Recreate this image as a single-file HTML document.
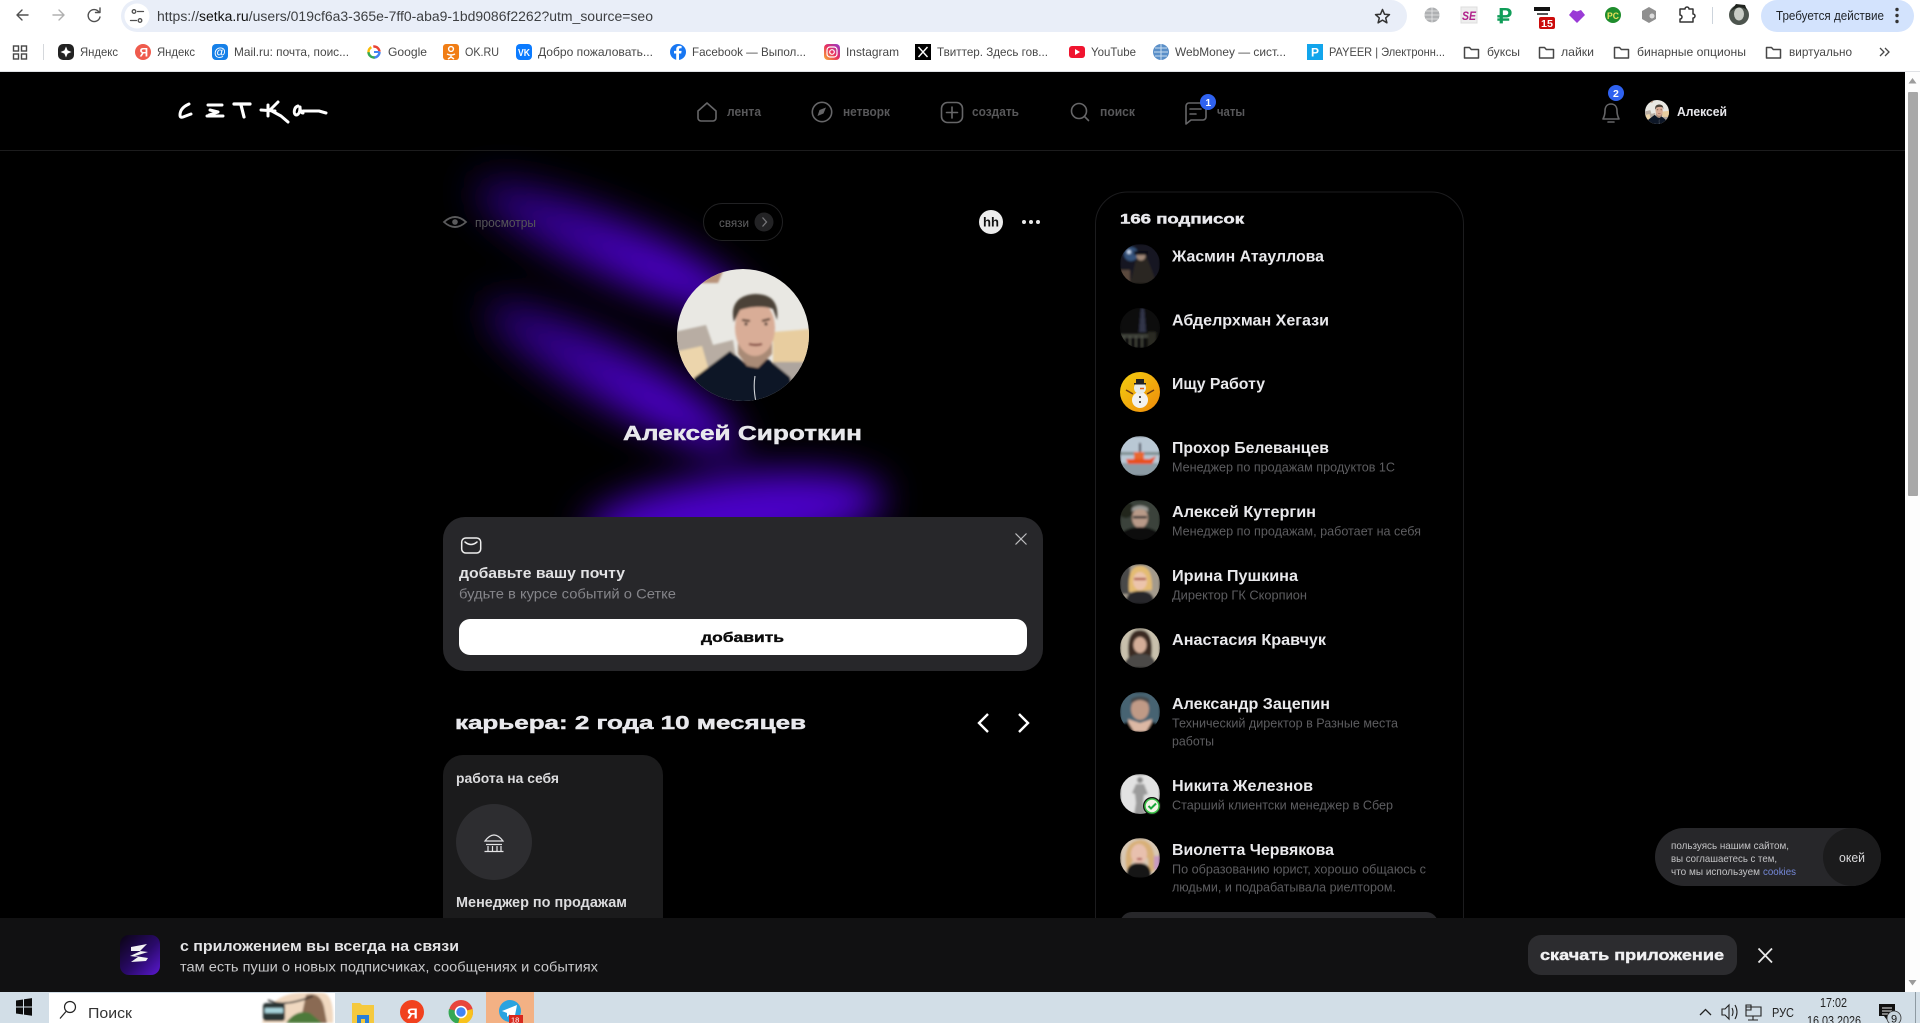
<!DOCTYPE html>
<html lang="ru"><head><meta charset="utf-8"><title>Сетка</title>
<style>
html,body{margin:0;padding:0;background:#000;width:1920px;height:1023px;overflow:hidden}
svg{display:block;position:absolute;left:0;top:0;filter:blur(.35px)}
text{font-family:"Liberation Sans","Noto Sans CJK SC",sans-serif;white-space:pre}
.bm{font-size:12px;fill:#474747}
.nav{font-size:13px;font-weight:bold;fill:#58585a}
.nm{font-size:15.5px;font-weight:bold;fill:#e9e9ec}
.sb{font-size:13px;fill:#5d5d60}
.wd{font-weight:bold;fill:#e8e8ec;stroke:#e8e8ec;stroke-width:.45}
.ic{fill:none;stroke:#666668;stroke-width:1.6;stroke-linecap:round;stroke-linejoin:round}
.ch{fill:none;stroke:#505050;stroke-width:1.4;stroke-linecap:round;stroke-linejoin:round}
</style></head><body>
<svg width="1920" height="1023" viewBox="0 0 1920 1023" xmlns="http://www.w3.org/2000/svg">
<defs>
<filter id="blur" x="-40%" y="-100%" width="180%" height="300%"><feGaussianBlur stdDeviation="19"/></filter>
<filter id="s1" x="-20%" y="-20%" width="140%" height="140%"><feGaussianBlur stdDeviation="1.1"/></filter>
<filter id="s2" x="-20%" y="-20%" width="140%" height="140%"><feGaussianBlur stdDeviation="1"/></filter>
<clipPath id="pageclip"><rect x="0" y="72" width="1905" height="846"/></clipPath>
<clipPath id="big"><circle cx="743" cy="335" r="66"/></clipPath>
<clipPath id="av"><circle cx="0" cy="0" r="20"/></clipPath>
<linearGradient id="yel" x1="0" y1="0" x2="1" y2="1"><stop offset="0" stop-color="#f2cf10"/><stop offset="1" stop-color="#f08a0a"/></linearGradient>
<linearGradient id="app" x1="0" y1="0" x2="1" y2="1"><stop offset="0" stop-color="#0a0412"/><stop offset="0.55" stop-color="#2a0a6a"/><stop offset="1" stop-color="#5a18d0"/></linearGradient>
<linearGradient id="ig" x1="0" y1="1" x2="1" y2="0"><stop offset="0" stop-color="#f9b233"/><stop offset="0.5" stop-color="#e8305f"/><stop offset="1" stop-color="#8f3bd0"/></linearGradient>
<linearGradient id="st1" x1="0" y1="0" x2="1" y2="0"><stop offset="0" stop-color="#26006e"/><stop offset=".7" stop-color="#4c00c8"/><stop offset="1" stop-color="#4c00c8"/></linearGradient>
<g id="folder"><path d="M1.500 3.500h5l1.800 2h7.200v8.500h-14z" fill="none" stroke="#474747" stroke-width="1.500" stroke-linejoin="round"/></g>
<g id="face">
 <g clip-path="url(#big)">
  <rect x="670" y="262" width="146" height="146" fill="#e9e8e3"/>
  <g filter="url(#s1)">
  <path d="M700 269h24l-6 14h-18z" fill="#b8937a"/>
  <path d="M674 332l32-7 7 20 20-5 5 30-64 12z" fill="#b8ada3"/>
  <path d="M674 352l28-6 8 28-20 12-16-10z" fill="#ecd5ac"/>
  <path d="M773 332l38-3v34l-38 0z" fill="#e8cd9f"/>
  <path d="M773 362h36v22h-30z" fill="#aea59e"/>
  <path d="M688 404l6-26 36-27 16 13 22-5 22 18 6 27z" fill="#0e1926"/>
  <path d="M738 342l34-4v16l-14 14-11-2-9-12z" fill="#a98a76"/>
  <ellipse cx="755" cy="328" rx="20" ry="28" fill="#d9ad97"/>
  <path d="M734 322c-4-16 3-27 21-28 18 0 24 10 22 26l-4-11c-8-3-22-3-33 1z" fill="#4c4238"/>
  <path d="M742 320l8 1M762 321l8-2" stroke="#4a3428" stroke-width="2" fill="none"/>
  <circle cx="746" cy="324" r="1.500" fill="#2c2420"/><circle cx="766" cy="324" r="1.500" fill="#2c2420"/>
  <path d="M749 344q7 2 13 0" stroke="#7c3f38" stroke-width="2.200" fill="none"/>
  </g>
  <path d="M755 376q-2 12 1 26" stroke="#cfd2d6" stroke-width="1.100" fill="none"/>
 </g>
</g>
</defs>

<!-- page -->
<rect width="1920" height="1023" fill="#000"/>
<g clip-path="url(#pageclip)">
 <g filter="url(#blur)">
  <ellipse cx="612" cy="248" rx="150" ry="29" transform="rotate(24 612 248)" fill="url(#st1)"/>
  <ellipse cx="612" cy="376" rx="145" ry="29" transform="rotate(29 612 376)" fill="url(#st1)"/>
  <ellipse cx="735" cy="515" rx="150" ry="40" transform="rotate(-7 735 515)" fill="#4c00c8"/>
 </g>
</g>

<!-- browser chrome -->
<rect width="1920" height="71" fill="#fff"/>
<rect y="71" width="1920" height="1" fill="#dfe1e5"/>
<path class="ch" d="M28 15H17M22 10l-5 5 5 5"/>
<path class="ch" style="stroke:#b0b0b0" d="M53 15h11M59 10l5 5-5 5"/>
<path class="ch" d="M99 12a6 6 0 1 0 1 5M100 8v4.500h-4.500"/>
<path d="M137 0h1254a16 16 0 0 1 16 16a16 16 0 0 1 -16 16H137a16 16 0 0 1 -16-16a16 16 0 0 1 16-16z" fill="#e9eef8"/>
<circle cx="137" cy="16" r="12.500" fill="#fff"/>
<g class="ch" style="stroke-width:1.300"><circle cx="134" cy="11.500" r="1.800"/><circle cx="140" cy="20.500" r="1.800"/><path d="M137.500 11.500h6M130.500 20.500h6"/></g>
<text x="157" y="21" font-size="13.500" fill="#3d3f42" textLength="496" lengthAdjust="spacingAndGlyphs">https://<tspan fill="#111">setka.ru</tspan>/users/019cf6a3-365e-7ff0-aba9-1bd9086f2262?utm_source=seo</text>
<path d="M1382.500 9.500l2 4.700 5 .4-3.800 3.300 1.200 4.900-4.400-2.700-4.400 2.700 1.200-4.900-3.800-3.300 5-.4z" fill="none" stroke="#333" stroke-width="1.500" stroke-linejoin="round"/>

<!-- extensions -->
<circle cx="1432" cy="15" r="7.500" fill="#aeb0b2"/><path d="M1424.500 15h15M1432 7.500v15M1426 11h12M1426 19h12" stroke="#e8e8e8" stroke-width=".8"/>
<rect x="1461" y="7" width="16" height="16" fill="#eee" stroke="#ddd"/><text x="1462" y="20" font-size="12" font-weight="bold" font-style="italic" fill="#b0208a" textLength="14" lengthAdjust="spacingAndGlyphs">SE</text>
<text x="1497" y="23" font-size="20" font-weight="bold" fill="#0f9d58" textLength="15" lengthAdjust="spacingAndGlyphs">₽</text>
<rect x="1534" y="7" width="16" height="4" fill="#111"/><rect x="1537" y="13" width="11" height="2" fill="#555"/>
<rect x="1539" y="17" width="16" height="12" rx="2" fill="#cc0c0c"/><text x="1541" y="27" font-size="10" font-weight="bold" fill="#fff" textLength="12" lengthAdjust="spacingAndGlyphs">15</text>
<path d="M1577 23l-8-8 4-5 4 1.500 4-1.500 4 5z" fill="#9a3ad6"/>
<circle cx="1613" cy="15" r="8" fill="#1f8d2d"/><text x="1607" y="19" font-size="9" font-weight="bold" fill="#e8e05a" textLength="12" lengthAdjust="spacingAndGlyphs">PC</text>
<path d="M1649 7l7 4v8l-7 4-7-4v-8z" fill="#8f8f8f"/><circle cx="1652" cy="16" r="2.500" fill="#ddd"/>
<path d="M1680 9h5a2 2 0 0 1 4 0h4v5a2 2 0 0 1 0 4v4h-13v-3a2 2 0 0 0 0-4z" fill="none" stroke="#333" stroke-width="1.500" stroke-linejoin="round"/>
<rect x="1712" y="7" width="1" height="17" fill="#cdd4dc"/>
<circle cx="1739" cy="15" r="10" fill="#4d554e"/><ellipse cx="1739" cy="14" rx="5" ry="6.500" fill="#c9cdc6"/><path d="M1730 12q9-8 17-2l-2-5-9-1z" fill="#20241f"/>
<path d="M1777 0h121a16 16 0 0 1 16 16a16 16 0 0 1-16 16h-121a16 16 0 0 1-16-16a16 16 0 0 1 16-16z" fill="#d3e3fd"/>
<text x="1776" y="20" font-size="12.500" fill="#1f2328" textLength="108" lengthAdjust="spacingAndGlyphs">Требуется действие</text>
<g fill="#333"><circle cx="1897" cy="9.500" r="1.700"/><circle cx="1897" cy="15.500" r="1.700"/><circle cx="1897" cy="21.500" r="1.700"/></g>

<!-- bookmarks -->
<g fill="none" stroke="#474747" stroke-width="1.400"><rect x="13.500" y="46" width="5" height="5"/><rect x="21.500" y="46" width="5" height="5"/><rect x="13.500" y="54" width="5" height="5"/><rect x="21.500" y="54" width="5" height="5"/></g>
<rect x="43" y="44" width="1" height="16" fill="#d5d8dc"/>
<rect x="58" y="44" width="16" height="16" rx="5" fill="#222"/><path d="M66 46.500l1.600 3.900 3.900 1.600-3.900 1.600L66 57.500l-1.600-3.900-3.900-1.600 3.900-1.600z" fill="#fff"/>
<text class="bm" x="80" y="56" textLength="38" lengthAdjust="spacingAndGlyphs">Яндекс</text>
<circle cx="143" cy="52" r="8" fill="#ef5b4d"/><text x="139.500" y="56.500" font-size="12" font-weight="bold" fill="#fff">Я</text>
<text class="bm" x="157" y="56" textLength="38" lengthAdjust="spacingAndGlyphs">Яндекс</text>
<rect x="212" y="44" width="16" height="16" rx="4" fill="#1680e8"/><text x="214" y="56" font-size="12" font-weight="bold" fill="#fff">@</text>
<text class="bm" x="234" y="56" textLength="115" lengthAdjust="spacingAndGlyphs">Mail.ru: почта, поис...</text>
<circle cx="374" cy="52" r="5.500" fill="none" stroke="#4285f4" stroke-width="2.400" stroke-dasharray="9 26"/><circle cx="374" cy="52" r="5.500" fill="none" stroke="#ea4335" stroke-width="2.400" stroke-dasharray="9 26" stroke-dashoffset="-25"/><circle cx="374" cy="52" r="5.500" fill="none" stroke="#fbbc05" stroke-width="2.400" stroke-dasharray="7 28" stroke-dashoffset="-16"/><circle cx="374" cy="52" r="5.500" fill="none" stroke="#34a853" stroke-width="2.400" stroke-dasharray="9 26" stroke-dashoffset="-8"/><path d="M374 52h5.500" stroke="#4285f4" stroke-width="2"/>
<text class="bm" x="388" y="56" textLength="39" lengthAdjust="spacingAndGlyphs">Google</text>
<rect x="443" y="44" width="16" height="16" rx="3" fill="#f07d15"/><circle cx="451" cy="49" r="2.400" fill="none" stroke="#fff" stroke-width="1.400"/><path d="M447 54q4 2 8 0M451 55v2M448 59l3-2 3 2" stroke="#fff" stroke-width="1.400" fill="none"/>
<text class="bm" x="465" y="56" textLength="34" lengthAdjust="spacingAndGlyphs">OK.RU</text>
<rect x="516" y="44" width="16" height="16" rx="4" fill="#0b7bff"/><text x="518" y="56" font-size="10" font-weight="bold" fill="#fff" textLength="12" lengthAdjust="spacingAndGlyphs">VK</text>
<text class="bm" x="538" y="56" textLength="115" lengthAdjust="spacingAndGlyphs">Добро пожаловать...</text>
<circle cx="678" cy="52" r="8" fill="#1877f2"/><path d="M679 60v-6.500h2.200l.4-2.600H679V49.600c0-.8.3-1.300 1.400-1.300h1.200V46c-.5 0-1.200-.1-2-.1-2 0-3.400 1.200-3.400 3.400v1.600H674v2.600h2.200V60z" fill="#fff"/>
<text class="bm" x="692" y="56" textLength="114" lengthAdjust="spacingAndGlyphs">Facebook — Выпол...</text>
<rect x="824" y="44" width="16" height="16" rx="4" fill="url(#ig)"/><rect x="827" y="47" width="10" height="10" rx="3" fill="none" stroke="#fff" stroke-width="1.200"/><circle cx="832" cy="52" r="2.300" fill="none" stroke="#fff" stroke-width="1.200"/>
<text class="bm" x="846" y="56" textLength="53" lengthAdjust="spacingAndGlyphs">Instagram</text>
<rect x="915" y="44" width="16" height="16" fill="#000"/><path d="M918.500 47l9 10M927.500 47l-9 10" stroke="#fff" stroke-width="1.400"/>
<text class="bm" x="937" y="56" textLength="111" lengthAdjust="spacingAndGlyphs">Твиттер. Здесь гов...</text>
<rect x="1069" y="46" width="16" height="12" rx="3" fill="#f0142f"/><path d="M1075 49l5 3-5 3z" fill="#fff"/>
<text class="bm" x="1091" y="56" textLength="45" lengthAdjust="spacingAndGlyphs">YouTube</text>
<circle cx="1161" cy="52" r="8" fill="#5a8fc8"/><path d="M1155 48h12M1154 52h14M1155 56h12M1161 44v16" stroke="#c8dcf0" stroke-width="1"/>
<text class="bm" x="1175" y="56" textLength="111" lengthAdjust="spacingAndGlyphs">WebMoney — сист...</text>
<rect x="1307" y="44" width="16" height="16" fill="#12a5ec"/><text x="1311" y="56.500" font-size="12" font-weight="bold" fill="#fff">P</text>
<text class="bm" x="1329" y="56" textLength="116" lengthAdjust="spacingAndGlyphs">PAYEER | Электронн...</text>
<use href="#folder" x="1463" y="44"/><text class="bm" x="1487" y="56" textLength="33" lengthAdjust="spacingAndGlyphs">буксы</text>
<use href="#folder" x="1538" y="44"/><text class="bm" x="1561" y="56" textLength="33" lengthAdjust="spacingAndGlyphs">лайки</text>
<use href="#folder" x="1613" y="44"/><text class="bm" x="1637" y="56" textLength="109" lengthAdjust="spacingAndGlyphs">бинарные опционы</text>
<use href="#folder" x="1765" y="44"/><text class="bm" x="1789" y="56" textLength="63" lengthAdjust="spacingAndGlyphs">виртуально</text>
<path d="M1880 48l4 4-4 4M1885 48l4 4-4 4" fill="none" stroke="#474747" stroke-width="1.300"/>

<!-- site header -->
<rect x="0" y="150" width="1905" height="1" fill="#1c1c1d"/>
<g fill="none" stroke="#fff" stroke-linecap="round" stroke-linejoin="round">
 <path d="M189 104q-9 4-9 11 0 3 3 2l8-3" stroke-width="3"/>
 <path d="M208 105h14M210 110l8 2-9 3M207 116h16" stroke-width="3"/>
 <path d="M234 104h16M241 105l3 12" stroke-width="3.200"/>
 <path d="M261 110l14 1M268 105v11M278 102l-8 8 11 6 7 6" stroke-width="3"/>
 <path d="M298 106c-4 1-5 8-2 9 3 0 4-4 4-8 0 3 1 6 3 6M303 111h16l7 2" stroke-width="3"/>
</g>
<!-- nav -->
<path class="ic" d="M707 103l9 8v7a3 3 0 0 1-3 3h-12a3 3 0 0 1-3-3v-7z"/>
<text class="nav" x="727" y="116" textLength="34" lengthAdjust="spacingAndGlyphs">лента</text>
<circle class="ic" cx="822" cy="112" r="9.700"/><path d="M826 107.500l-6.500 2.500-2 6 6-2.500z" fill="#666668"/>
<text class="nav" x="843" y="116" textLength="47" lengthAdjust="spacingAndGlyphs">нетворк</text>
<rect class="ic" x="941.500" y="102.500" width="21" height="20" rx="6"/><path class="ic" d="M952 107v11M946.500 112.500h11"/>
<text class="nav" x="972" y="116" textLength="47" lengthAdjust="spacingAndGlyphs">создать</text>
<circle class="ic" cx="1079" cy="111" r="7.500"/><path class="ic" d="M1084.500 116.500l4 4"/>
<text class="nav" x="1100" y="116" textLength="35" lengthAdjust="spacingAndGlyphs">поиск</text>
<path class="ic" d="M1190 103h13a3 3 0 0 1 3 3v11a3 3 0 0 1-3 3h-12l-5 4v-18a3 3 0 0 1 3-3z"/><path class="ic" d="M1190 109h11M1190 114h6"/>
<circle cx="1208" cy="102" r="8" fill="#2f62f0"/><text x="1205.500" y="106" font-size="10" font-weight="bold" fill="#fff">1</text>
<text class="nav" x="1217" y="116" textLength="28" lengthAdjust="spacingAndGlyphs">чаты</text>
<path class="ic" d="M1611 104c-4 0-6 3-6 7 0 4-1 6-2 8h16c-1-2-2-4-2-8 0-4-2-7-6-7zM1608 122h6"/>
<circle cx="1616" cy="93" r="8" fill="#2f62f0"/><text x="1613" y="97" font-size="10.500" font-weight="bold" fill="#fff">2</text>
<g transform="translate(1657 112) scale(.182) translate(-743 -335)"><use href="#face"/></g>
<text x="1677" y="116" font-size="13" font-weight="bold" fill="#e8e8ec" textLength="50" lengthAdjust="spacingAndGlyphs">Алексей</text>

<!-- profile top -->
<path d="M444 222q11-10 22 0q-11 10-22 0z" fill="none" stroke="#5a5a5c" stroke-width="1.800"/><circle cx="455" cy="222" r="2.800" fill="#5a5a5c"/>
<text x="475" y="227" font-size="12.500" fill="#565658" textLength="61" lengthAdjust="spacingAndGlyphs">просмотры</text>
<rect x="703.500" y="203.500" width="79" height="37" rx="18.500" fill="#000" stroke="#212123"/>
<text x="719" y="227" font-size="12" fill="#606062" textLength="30" lengthAdjust="spacingAndGlyphs">связи</text>
<circle cx="764" cy="222" r="9.500" fill="#232325"/><path d="M762.500 217.500l4 4.500-4 4.500" fill="none" stroke="#77777a" stroke-width="1.300"/>
<circle cx="991" cy="222" r="12" fill="#ececec"/><text x="983" y="226.500" font-size="13" font-weight="bold" fill="#111" textLength="16" lengthAdjust="spacingAndGlyphs">hh</text>
<g fill="#e8e8e8"><circle cx="1024" cy="222" r="2"/><circle cx="1031" cy="222" r="2"/><circle cx="1038" cy="222" r="2"/></g>
<use href="#face"/>
<text class="wd" x="623" y="440" font-size="20" textLength="239" lengthAdjust="spacingAndGlyphs">Алексей Сироткин</text>

<!-- mail card -->
<rect x="443" y="517" width="600" height="154" rx="22" fill="#27272a"/>
<rect x="461.700" y="538" width="19" height="15" rx="4" fill="none" stroke="#eee" stroke-width="1.500"/><path d="M465 542q6 5 12 0" fill="none" stroke="#eee" stroke-width="1.500" stroke-linecap="round"/>
<path d="M1015.500 533.500l11 11M1026.500 533.500l-11 11" stroke="#bdbdbf" stroke-width="1.200"/>
<text x="459" y="578" font-size="15" font-weight="bold" fill="#e2e2e4" textLength="166" lengthAdjust="spacingAndGlyphs">добавьте вашу почту</text>
<text x="459" y="598.500" font-size="14" fill="#85858a" textLength="217" lengthAdjust="spacingAndGlyphs">будьте в курсе событий о Сетке</text>
<rect x="459" y="619" width="568" height="36" rx="11" fill="#fff"/>
<text x="701" y="642" font-size="13.500" font-weight="bold" fill="#0a0a0a" stroke="#0a0a0a" stroke-width=".35" textLength="83" lengthAdjust="spacingAndGlyphs">добавить</text>

<!-- career -->
<text class="wd" x="455" y="729" font-size="18" textLength="351" lengthAdjust="spacingAndGlyphs">карьера: 2 года 10 месяцев</text>
<path d="M988 714l-9 9 9 9M1019 714l9 9-9 9" fill="none" stroke="#fff" stroke-width="2.400"/>
<path d="M443 930V775a20 20 0 0 1 20-20h180a20 20 0 0 1 20 20v155z" fill="#1b1b1c"/>
<text x="456" y="783" font-size="14" font-weight="bold" fill="#dcdcde" textLength="103" lengthAdjust="spacingAndGlyphs">работа на себя</text>
<circle cx="494" cy="842" r="38" fill="#2d2d30"/>
<path d="M485 841q9-12 18 0zM486 844.500h16M488 846v5M492.500 846v5M497 846v5M501 846v5M484.500 851.500h19" fill="none" stroke="#e4e4e6" stroke-width="1.200"/>
<text x="456" y="907" font-size="14.500" font-weight="bold" fill="#dcdcde" textLength="171" lengthAdjust="spacingAndGlyphs">Менеджер по продажам</text>

<!-- right panel -->
<path d="M1095.500 930V224a32 32 0 0 1 32-32h304a32 32 0 0 1 32 32v706" fill="none" stroke="#1c1c1e"/>
<text class="wd" x="1120" y="223.500" font-size="13.500" textLength="124" lengthAdjust="spacingAndGlyphs">166 подписок</text>

<!-- avatars -->
<g transform="translate(1140 264)"><g clip-path="url(#av)" filter="url(#s2)"><rect x="-20" y="-20" width="40" height="40" fill="#141820"/><circle cx="-9" cy="-10" r="7" fill="#36527c"/><circle cx="-11" cy="-12" r="2" fill="#c8d8ee"/><path d="M-4-4l10-4 5 12 6 16H-10z" fill="#2c2620"/><circle cx="1" cy="-8" r="4.500" fill="#a08878"/><path d="M-6-13h14v4H-6z" fill="#101014"/><rect x="-20" y="6" width="10" height="14" fill="#5a4a3c"/></g></g>
<g transform="translate(1140 328)"><g clip-path="url(#av)" filter="url(#s2)"><rect x="-20" y="-20" width="40" height="40" fill="#08090c"/><path d="M1-20l3 0 2 24H-1z" fill="#33364a"/><path d="M-20 7h30v2H-20zM-16 8v12M-10 8v12M-4 8v12M2 8v12" stroke="#6a6f62" stroke-width=".8" fill="none"/><rect x="8" y="4" width="8" height="16" fill="#2a2a22"/></g></g>
<g transform="translate(1140 392)"><g clip-path="url(#av)"><rect x="-20" y="-20" width="40" height="40" fill="url(#yel)"/><circle cx="0" cy="8" r="8" fill="#f2f2f0"/><circle cx="0" cy="-4" r="6" fill="#e6ecea"/><rect x="-4" y="-13" width="8" height="5" fill="#222"/><rect x="-6" y="-9" width="12" height="1.500" fill="#222"/><path d="M-7 2l-7-4M7 2l7-4" stroke="#6a3a14" stroke-width="1.500"/><circle cy="5" r="1" fill="#222"/><circle cy="10" r="1" fill="#222"/><path d="M0-3.500h4" stroke="#e8641a" stroke-width="1.500"/></g></g>
<g transform="translate(1140 456)"><g clip-path="url(#av)" filter="url(#s2)"><rect x="-20" y="-20" width="40" height="27" fill="#b9c8d4"/><rect x="-20" y="7" width="40" height="13" fill="#8c9ba4"/><rect x="-20" y="-4" width="40" height="3" fill="#7e8e90"/><path d="M-14 3h24l6-3-4 8h-24z" fill="#e8501e"/><rect x="-6" y="-4" width="10" height="7" fill="#e8682e"/><rect x="-1" y="-13" width="2" height="9" fill="#334"/></g></g>
<g transform="translate(1140 520)"><g clip-path="url(#av)" filter="url(#s2)"><rect x="-20" y="-20" width="40" height="40" fill="#3a423a"/><circle cx="-14" cy="-10" r="8" fill="#22261f"/><ellipse cy="-2" rx="8" ry="10" fill="#b89a88"/><path d="M-8-8q8-6 16 0l0-4q-8-5-16 0z" fill="#9a9a94"/><rect x="-7" y="-4" width="14" height="2.500" fill="#333"/><path d="M-20 20v-6q8-7 20-7t20 7v6z" fill="#0e0e10"/></g></g>
<g transform="translate(1140 584)"><g clip-path="url(#av)" filter="url(#s2)"><rect x="-20" y="-20" width="40" height="40" fill="#a39a8c"/><rect x="-20" y="-20" width="10" height="30" fill="#4a4a48"/><path d="M-11 8q-2-26 11-26 13 0 12 24z" fill="#e4bc72"/><ellipse cy="-3" rx="7" ry="9" fill="#ecc4ac"/><rect x="-6" y="-6" width="12" height="2" fill="#a03028"/><path d="M-14 20q-1-13 14-13t14 13z" fill="#26282c"/></g></g>
<g transform="translate(1140 648)"><g clip-path="url(#av)" filter="url(#s2)"><rect x="-20" y="-20" width="40" height="40" fill="#c8c0ac"/><path d="M-11 12q-4-30 11-30t11 30z" fill="#3a2a20"/><ellipse cy="-3" rx="6.500" ry="8" fill="#d4ae98"/><path d="M-16 20q0-13 16-14t16 14z" fill="#4c4a46"/></g></g>
<g transform="translate(1140 712)"><g clip-path="url(#av)" filter="url(#s2)"><rect x="-20" y="-20" width="40" height="40" fill="#466472"/><ellipse cy="-3" rx="9" ry="11" fill="#c09a86"/><path d="M-9-8q9-8 18 0l0-5q-9-5-18 0z" fill="#444a4c"/><path d="M-10 20l-2-13 12 4 12-4-2 13z" fill="#dcb8a4"/><path d="M-20 20v-8l8-2 6 10zM20 20v-8l-8-2-6 10z" fill="#000"/></g></g>
<g transform="translate(1140 794)"><g clip-path="url(#av)" filter="url(#s2)"><rect x="-20" y="-20" width="40" height="40" fill="#e2e2e2"/><circle cy="-14" r="3" fill="#888"/><path d="M-4-10h8l4 10-4 1-1 8 3 12H-6l2-12-1-9-3-1z" fill="#9b9b9b"/></g></g>
<circle cx="1152" cy="806" r="9" fill="#10130f"/><circle cx="1152" cy="806" r="7" fill="#f3f3e8" stroke="#3dc44a" stroke-width="1.500"/><path d="M1148.500 806l2.500 2.500 5-5" fill="none" stroke="#18a83c" stroke-width="2"/>
<g transform="translate(1140 858)"><g clip-path="url(#av)" filter="url(#s2)"><rect x="-20" y="-20" width="40" height="40" fill="#d8c8b4"/><path d="M-13 14q-6-30 13-32 16 0 15 30l-6 3-1-15h-14z" fill="#d8b078"/><ellipse cx="-1" cy="-4" rx="8" ry="10" fill="#e8c0ae"/><path d="M-3 1h5" stroke="#a84848" stroke-width="2"/><path d="M-14 20q0-16 13-15 13 0 12 15z" fill="#141416"/><rect x="14" y="-2" width="6" height="14" fill="#c89ac0"/></g></g>

<text class="nm" x="1172" y="261.500" textLength="152" lengthAdjust="spacingAndGlyphs">Жасмин Атауллова</text>
<text class="nm" x="1172" y="325.500" textLength="157" lengthAdjust="spacingAndGlyphs">Абделрхман Хегази</text>
<text class="nm" x="1172" y="389" textLength="93" lengthAdjust="spacingAndGlyphs">Ищу Работу</text>
<text class="nm" x="1172" y="453" textLength="157" lengthAdjust="spacingAndGlyphs">Прохор Белеванцев</text>
<text class="sb" x="1172" y="471.500" textLength="223" lengthAdjust="spacingAndGlyphs">Менеджер по продажам продуктов 1С</text>
<text class="nm" x="1172" y="517" textLength="144" lengthAdjust="spacingAndGlyphs">Алексей Кутергин</text>
<text class="sb" x="1172" y="535.500" textLength="249" lengthAdjust="spacingAndGlyphs">Менеджер по продажам, работает на себя</text>
<text class="nm" x="1172" y="581" textLength="126" lengthAdjust="spacingAndGlyphs">Ирина Пушкина</text>
<text class="sb" x="1172" y="599.500" textLength="135" lengthAdjust="spacingAndGlyphs">Директор ГК Скорпион</text>
<text class="nm" x="1172" y="645" textLength="154" lengthAdjust="spacingAndGlyphs">Анастасия Кравчук</text>
<text class="nm" x="1172" y="709" textLength="158" lengthAdjust="spacingAndGlyphs">Александр Зацепин</text>
<text class="sb" x="1172" y="727.500" textLength="226" lengthAdjust="spacingAndGlyphs">Технический директор в Разные места</text>
<text class="sb" x="1172" y="745.500" textLength="42" lengthAdjust="spacingAndGlyphs">работы</text>
<text class="nm" x="1172" y="791" textLength="141" lengthAdjust="spacingAndGlyphs">Никита Железнов</text>
<text class="sb" x="1172" y="809.500" textLength="221" lengthAdjust="spacingAndGlyphs">Старший клиентски менеджер в Сбер</text>
<text class="nm" x="1172" y="855" textLength="162" lengthAdjust="spacingAndGlyphs">Виолетта Червякова</text>
<text class="sb" x="1172" y="873.500" textLength="254" lengthAdjust="spacingAndGlyphs">По образованию юрист, хорошо общаюсь с</text>
<text class="sb" x="1172" y="891.500" textLength="224" lengthAdjust="spacingAndGlyphs">людьми, и подрабатывала риелтором.</text>
<rect x="1120" y="912" width="318" height="40" rx="12" fill="#27272a"/>

<!-- cookie -->
<rect x="1655" y="828" width="226" height="58" rx="29" fill="#27272a"/>
<circle cx="1852" cy="857" r="29" fill="#1b1b1c"/>
<text x="1671" y="849" font-size="10.500" fill="#c4c4c6" textLength="118" lengthAdjust="spacingAndGlyphs">пользуясь нашим сайтом,</text>
<text x="1671" y="862" font-size="10.500" fill="#c4c4c6" textLength="106" lengthAdjust="spacingAndGlyphs">вы соглашаетесь с тем,</text>
<text x="1671" y="875" font-size="10.500" fill="#c4c4c6" textLength="89" lengthAdjust="spacingAndGlyphs">что мы используем</text>
<text x="1763" y="875" font-size="10.500" fill="#7488d8" textLength="33" lengthAdjust="spacingAndGlyphs">cookies</text>
<text x="1839" y="862" font-size="13" fill="#d8d8da" textLength="26" lengthAdjust="spacingAndGlyphs">окей</text>

<!-- app banner -->
<rect y="918" width="1905" height="74" fill="#111112"/>
<rect x="120" y="935" width="40" height="40" rx="9" fill="url(#app)"/>
<path d="M131 947l16-3-7 7 8 1-13 4 13 2-2 3-15 1 7-5-8-1 11-5-10 0z" fill="#f2f2f2"/>
<text x="180" y="951" font-size="15" font-weight="bold" fill="#e4e4e6" textLength="279" lengthAdjust="spacingAndGlyphs">с приложением вы всегда на связи</text>
<text x="180" y="971.500" font-size="14" fill="#c8c8ca" textLength="418" lengthAdjust="spacingAndGlyphs">там есть пуши о новых подписчиках, сообщениях и событиях</text>
<rect x="1528" y="935" width="209" height="40" rx="13" fill="#2c2c2f"/>
<text x="1540" y="960" font-size="14.500" font-weight="bold" fill="#f0f0f2" stroke="#f0f0f2" stroke-width=".4" textLength="184" lengthAdjust="spacingAndGlyphs">скачать приложение</text>
<path d="M1758.500 948.500l13.500 14M1772 948.500l-13.500 14" stroke="#e8e8e8" stroke-width="1.800"/>

<!-- scrollbar -->
<rect x="1905" y="72" width="15" height="920" fill="#fdfdfd"/>
<path d="M1912.500 78l4 5.500h-8z" fill="#9c9c9c"/><rect x="1908" y="92" width="10" height="404" rx="1" fill="#a8a8a8"/>
<path d="M1912.500 985.500l4-5.500h-8z" fill="#9c9c9c"/>

<!-- taskbar -->
<rect y="992" width="1920" height="31" fill="#d2dee7"/>
<g fill="#0d0d0d"><path d="M16 1000.500l7-1v7h-7zM24 999.300l8-1.200v8.400h-8zM16 1007.500h7v7l-7-1zM24 1007.500h8v8.300l-8-1.200z"/></g>
<rect x="49" y="993" width="286" height="30" fill="#fff"/>
<circle cx="70" cy="1007" r="5.500" fill="none" stroke="#222" stroke-width="1.200"/><path d="M66 1011.500l-6 7" stroke="#222" stroke-width="1.200"/>
<text x="88" y="1018" font-size="15" fill="#333" textLength="44" lengthAdjust="spacingAndGlyphs">Поиск</text>
<g filter="url(#s2)">
 <path d="M262 1023q8-30 40-30h20q12 0 11 30z" fill="#f0d8c0"/>
 <path d="M300 1023l6-28q14-4 18 12l3 16z" fill="#8a6a52"/>
 <path d="M268 1000q15 8 45-4" stroke="#222" stroke-width="1.500" fill="none"/>
 <rect x="263" y="1003" width="22" height="18" rx="3" fill="#2a3436"/><rect x="265" y="1008" width="18" height="5" fill="#a8d4dc"/>
 <path d="M286 1023q10-14 24-10l12 10z" fill="#4d7a3a"/>
</g>
<path d="M352 1003h8l2 2h12v18h-22z" fill="#f5c93e"/><rect x="357" y="1015" width="12" height="8" fill="#2a7fd8"/><rect x="361" y="1019" width="4" height="4" fill="#f5c93e"/>
<circle cx="412" cy="1012" r="12" fill="#f1411e"/><text x="407" y="1018.500" font-size="15" font-weight="bold" fill="#fff">Я</text>
<circle cx="461" cy="1012" r="12" fill="#e8453c"/><path d="M461 1012l11.500-3a12 12 0 0 1-14.500 15z" fill="#f8c21c"/><path d="M461 1012l-3 12a12 12 0 0 1-9-15z" fill="#34a853"/><circle cx="461" cy="1012" r="5.500" fill="#4285f4" stroke="#fff" stroke-width="1.600"/>
<rect x="486" y="992" width="48" height="31" fill="#f3b184"/>
<circle cx="510" cy="1011" r="11" fill="#2aa3e0"/><path d="M502 1011l15-6-2.500 13-5-3.500-2.500 2.500v-4z" fill="#fff"/>
<rect x="509" y="1015" width="14" height="8" fill="#d8281e"/><text x="511" y="1022.500" font-size="7.500" fill="#fff">18</text>
<path d="M1700 1015l5.500-5.500 5.500 5.500" fill="none" stroke="#222" stroke-width="1.300"/>
<path d="M1722 1009h3l4-4v14l-4-4h-3zM1732 1008q2 4 0 8M1735 1005q4 7 0 14" fill="none" stroke="#222" stroke-width="1.100"/>
<path d="M1746 1007h15v9h-15zM1753 1016v4M1748 1020h10M1746 1005h5v5h-5z" fill="none" stroke="#222" stroke-width="1.100"/>
<text x="1772" y="1017" font-size="13" fill="#222" textLength="22" lengthAdjust="spacingAndGlyphs">РУС</text>
<text x="1820" y="1007" font-size="12.500" fill="#222" textLength="27" lengthAdjust="spacingAndGlyphs">17:02</text>
<text x="1807" y="1025" font-size="12.500" fill="#222" textLength="54" lengthAdjust="spacingAndGlyphs">16.03.2026</text>
<path d="M1879 1004h16v12h-5l-3 4-3-4h-5z" fill="#111"/><path d="M1882 1008h10M1882 1011h10M1882 1014h6" stroke="#eee" stroke-width="1"/>
<circle cx="1894" cy="1018" r="7" fill="#c8d4dc" stroke="#333" stroke-width=".8"/><text x="1891" y="1022.500" font-size="11" fill="#111">9</text>
<rect x="1915" y="992" width="1" height="31" fill="#8e9aa2"/>
</svg>
</body></html>
